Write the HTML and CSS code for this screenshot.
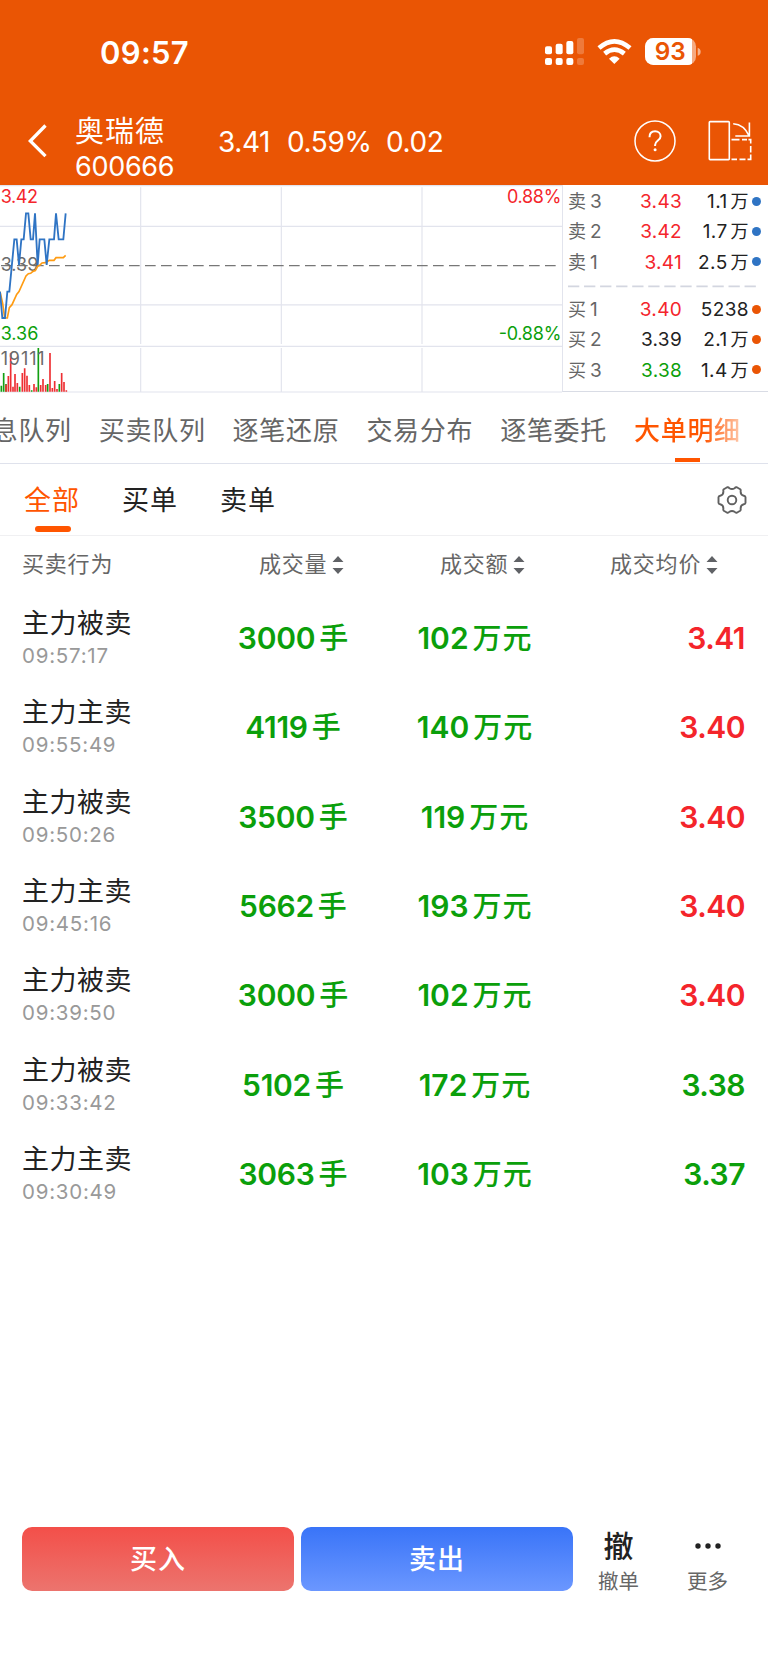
FILE: index.html
```html
<!DOCTYPE html>
<html lang="zh-CN">
<head>
<meta charset="utf-8">
<title>奥瑞德 600666</title>
<link rel="stylesheet" href="styles.css">
</head>
<body>
<header class="top">
  <div class="status">
    <span class="clock">09:57</span>
    <svg class="status-icons" viewBox="480 108 474 93" width="158" height="31">
      <g fill="#fff">
        <rect x="483" y="139" width="21" height="24" rx="6"/>
        <rect x="515" y="131" width="21" height="32" rx="6"/>
        <rect x="547" y="123" width="21" height="40" rx="6"/>
        <rect x="579" y="114" width="21" height="49" rx="6" opacity=".22"/>
        <rect x="483" y="174" width="21" height="21" rx="6"/>
        <rect x="515" y="174" width="21" height="21" rx="6"/>
        <rect x="547" y="174" width="21" height="21" rx="6"/>
        <rect x="579" y="174" width="21" height="21" rx="6" opacity=".22"/>
        <path d="M691 192 L675 176 Q691 162 707 176 Z"/>
      </g>
      <path d="M645 144 Q691 104 738 144" fill="none" stroke="#fff" stroke-width="14"/>
      <path d="M662 161 Q691 137 721 161" fill="none" stroke="#fff" stroke-width="14"/>
      <clipPath id="charge"><rect x="783" y="114" width="141" height="81"/></clipPath>
      <rect x="783" y="114" width="153" height="81" rx="25" fill="#fff" opacity=".5"/>
      <rect x="783" y="114" width="153" height="81" rx="25" fill="#fff" clip-path="url(#charge)"/>
      <path d="M941 143 Q950 146 950 155 Q950 164 941 167 Z" fill="#fff" opacity=".55"/>
      <text class="battery" x="859" y="181" text-anchor="middle" textLength="93" lengthAdjust="spacingAndGlyphs">93</text>
    </svg>
  </div>
  <div class="nav">
    <svg class="back" viewBox="0 0 20 34" width="20" height="34"><path d="M17.5 1.5 2.3 17l15.2 15.2" fill="none" stroke="#fff" stroke-width="3.300"/></svg>
    <div class="stock"><div class="name">奥瑞德</div><div class="code">600666</div></div>
    <div class="quote"><span class="q1">3.41</span><span class="q2">0.59%</span><span class="q3">0.02</span></div>
    <svg class="help" viewBox="0 0 42 42" width="42" height="42" fill="none" stroke="#fff"><circle cx="21" cy="21" r="20" stroke-width="1.5"/><path d="M15.5 17.2c0-3.8 2.3-5.9 5.6-5.9 3.2 0 5.5 2 5.500 4.900 0 4.300-5.500 4.400-5.500 8.700v1" stroke-width="2"/><circle cx="21.1" cy="29.8" r="1.5" fill="#fff" stroke="none"/></svg>
    <svg class="rotate" viewBox="0 0 44 42" width="44" height="42" fill="none" stroke="#fff" stroke-width="1.600"><rect x="1.3" y="1.6" width="20" height="38" rx=".8"/><path d="M25.200 3.700C33 4.300 37.800 8.200 41 15.800M27.300 16H41.400V2.600"/><path d="M23.500 19.600h8M34 19.600h5M40.500 19.600h2.200v4M42.700 26v6.500M42.700 34.500V39.400h-3.200M37.500 39.400h-6M29 39.400h-5.500"/></svg>
  </div>
</header>

<section class="market">
  <svg class="chart" viewBox="0 15 1686 624" width="562" height="208">
    <g stroke="#e2e4ed" stroke-width="3.500" fill="none">
      <path d="M0 17H1686M0 139H1686M0 374.500H1686M0 499H1686M0 636H1686"/>
      <path d="M422 22V492M422 504V636M844 22V492M844 504V636M1266 22V492M1266 504V636"/>
    </g>
    <path d="M0 257H1671" stroke="#777" stroke-width="3.500" stroke-dasharray="32 16" stroke-dashoffset="-3"/>
    <g class="axis">
      <text x="2" y="69" class="red" textLength="112">3.42</text>
      <text x="2" y="274" class="gray" textLength="113">3.39</text>
      <text x="2" y="480" class="green" textLength="113">3.36</text>
      <text x="1684" y="69" class="red" text-anchor="end" textLength="163">0.88%</text>
      <text x="1684" y="480" class="green" text-anchor="end" textLength="188">-0.88%</text>
    </g>
    <g stroke-width="5">
      <path stroke="#12a012" d="M4 635V617M11 635V579M18 635V612M59 635V620M95 635V631M115 635V504M143 635V612M178 635V612"/>
      <path stroke="#ee2f33" d="M18 635V614M25 635V588M32 635V519M39 635V620M45 635V582M52 635V609M67 635V579M74 635V565M81 635V587M88 635V615M102 635V612M109 635V622M122 635V615M129 635V597M137 635V615M150 635V519M157 635V624M164 635V603M171 635V627M185 635V579M192 635V606M199 635V631"/>
    </g>
    <g class="axis"><text x="2" y="556" class="gray" textLength="132">19111</text></g>
    <path fill="none" stroke="#ff9c13" stroke-width="5" d="M0 335 8 370 14 414 22 414 28 383 36 374 50 343 57 335 78 288 85 281 92 280 99 274 106 272 113 259 119 256 126 249 136 248 148 241 162 241 168 233 190 233 197 226"/>
    <path fill="none" stroke="#2f74c4" stroke-width="5.500" d="M0 335 7 414 15 414 22 335 28 335 43 178 50 178 57 255 64 178 71 178 78 100 85 100 92 178 99 178 105 100 113 255 119 178 133 178 140 255 148 178 162 178 168 100 176 178 190 178 197 100"/>
  </svg>
  <div class="book">
    <div class="lvl"><span>卖<i>3</i></span><b class="red">3.43</b><em>1.1<i>万</i></em><u class="sell"></u></div>
    <div class="lvl"><span>卖<i>2</i></span><b class="red">3.42</b><em>1.7<i>万</i></em><u class="sell"></u></div>
    <div class="lvl"><span>卖<i>1</i></span><b class="red">3.41</b><em>2.5<i>万</i></em><u class="sell"></u></div>
    <svg class="split" viewBox="0 0 189 17" width="189" height="17"><path d="M0 8.300H188.500" stroke="#d3d6e0" stroke-width="1.800" stroke-dasharray="11.300 4.750"/></svg>
    <div class="lvl"><span>买<i>1</i></span><b class="red">3.40</b><em>5238</em><u class="buy"></u></div>
    <div class="lvl"><span>买<i>2</i></span><b>3.39</b><em>2.1<i>万</i></em><u class="buy"></u></div>
    <div class="lvl"><span>买<i>3</i></span><b class="green">3.38</b><em>1.4<i>万</i></em><u class="buy"></u></div>
  </div>
</section>

<nav class="tabs">
  <span>消息队列</span><span>买卖队列</span><span>逐笔还原</span><span>交易分布</span><span>逐笔委托</span><span class="active">大单明细</span>
</nav>
<div class="filters">
  <span class="on">全部</span><span>买单</span><span>卖单</span>
  <svg class="gear" viewBox="-15 -15 30 30" width="30" height="30" fill="none" stroke="#606060" stroke-width="1.900" stroke-linejoin="round"><path d="M-4.800-12.700 Q-3.500-13-2.600-11.800 Q0-10.200 2.600-11.800 Q3.500-13 4.800-12.700 L8.200-10.700 Q9-10 8.600-8.500 Q8.600-5 11.800-4.300 Q13.300-4 13.500-2.800 V2.800 Q13.300 4 11.800 4.300 Q8.600 5 8.600 8.500 Q9 10 8.200 10.700 L4.800 12.700 Q3.500 13 2.600 11.800 Q0 10.200-2.600 11.800 Q-3.500 13-4.800 12.700 L-8.200 10.700 Q-9 10-8.600 8.500 Q-8.600 5-11.800 4.300 Q-13.300 4-13.500 2.800 V-2.800 Q-13.300-4-11.800-4.300 Q-8.600-5-8.600-8.500 Q-9-10-8.200-10.700Z"/><circle r="4.300"/></svg>
</div>

<div class="thead">
  <span class="h0">买卖行为</span>
  <span class="h1">成交量<svg class="sort" viewBox="0 0 12 18" width="12" height="18"><path d="M6 0 11.500 6H.5ZM6 18 11.500 12H.5Z"/></svg></span>
  <span class="h2">成交额<svg class="sort" viewBox="0 0 12 18" width="12" height="18"><path d="M6 0 11.500 6H.5ZM6 18 11.500 12H.5Z"/></svg></span>
  <span class="h3">成交均价<svg class="sort" viewBox="0 0 12 18" width="12" height="18"><path d="M6 0 11.500 6H.5ZM6 18 11.500 12H.5Z"/></svg></span>
</div>
<main class="list">
  <div class="row"><div class="act">主力被卖<time>09:57:17</time></div><div class="vol">3000<i>手</i></div><div class="amt">102<i>万元</i></div><div class="price red">3.41</div></div>
  <div class="row"><div class="act">主力主卖<time>09:55:49</time></div><div class="vol">4119<i>手</i></div><div class="amt">140<i>万元</i></div><div class="price red">3.40</div></div>
  <div class="row"><div class="act">主力被卖<time>09:50:26</time></div><div class="vol">3500<i>手</i></div><div class="amt">119<i>万元</i></div><div class="price red">3.40</div></div>
  <div class="row"><div class="act">主力主卖<time>09:45:16</time></div><div class="vol">5662<i>手</i></div><div class="amt">193<i>万元</i></div><div class="price red">3.40</div></div>
  <div class="row"><div class="act">主力被卖<time>09:39:50</time></div><div class="vol">3000<i>手</i></div><div class="amt">102<i>万元</i></div><div class="price red">3.40</div></div>
  <div class="row"><div class="act">主力被卖<time>09:33:42</time></div><div class="vol">5102<i>手</i></div><div class="amt">172<i>万元</i></div><div class="price green">3.38</div></div>
  <div class="row"><div class="act">主力主卖<time>09:30:49</time></div><div class="vol">3063<i>手</i></div><div class="amt">103<i>万元</i></div><div class="price green">3.37</div></div>
</main>

<footer class="bar">
  <div class="btn buyin">买入</div>
  <div class="btn sellout">卖出</div>
  <div class="tool t1"><strong>撤</strong><span>撤单</span></div>
  <div class="tool t2"><svg viewBox="0 0 28 36" width="28" height="36"><g fill="#222"><circle cx="4" cy="19" r="2.700"/><circle cx="14" cy="19" r="2.700"/><circle cx="24" cy="19" r="2.700"/></g></svg><span>更多</span></div>
</footer>
</body>
</html>
```
FILE: styles.css
```css
* { box-sizing: border-box; }
body {
  margin: 0;
  width: 768px;
  height: 1665px;
  display: flex;
  flex-direction: column;
  overflow: hidden;
  background: #fff;
  color: #222;
  font-family: Inter, "Noto Sans CJK SC", sans-serif;
  white-space: nowrap;
}
svg { display: block; flex: none; }
i, em { font-style: normal; }
.red { color: #f4252b; fill: #f4252b; }
.green { color: #0b9f0b; fill: #0b9f0b; }
.gray { fill: #6b6b6b; }

.top { height: 185px; flex: none; background: #ea5504; color: #fff; }
.status { height: 104px; display: flex; padding: 34px 66px 0 100px; justify-content: space-between; }
.clock { font-size: 31px; font-weight: 600; line-height: 37px; letter-spacing: 0.3px; }
.status-icons { margin-top: 2px; }
.battery { font: 600 74px Inter, sans-serif; fill: #ea5504; }
.nav { height: 81px; display: flex; padding-left: 28px; }
.back { margin-top: 20px; }
.stock { margin-left: 27px; width: 143px; }
.name { font-size: 29px; line-height: 36px; margin-top: 10px; letter-spacing: 1px; }
.code { font-size: 27px; line-height: 34px; letter-spacing: -0.3px; }
.quote { display: flex; font-size: 28px; line-height: 36px; margin-top: 20px; letter-spacing: -0.4px; width: 416px; }
.q1 { width: 69px; }
.q2 { width: 99px; }
.help { margin-top: 16px; }
.rotate { margin: 16px 0 0 32px; }

.market { display: flex; height: 208px; flex: none; }
.chart { overflow: hidden; }
.axis { font: 54px Inter, sans-serif; }
.book { width: 206px; height: 207px; border-left: 1px solid #e2e4ed; border-bottom: 1px solid #d9dce5; padding-top: 2px; }
.lvl { height: 30.300px; display: flex; align-items: center; font-size: 19px; line-height: 30px; padding-left: 5px; }
.lvl span { width: 52px; color: #666; font-size: 18px; }
.lvl span i { font-size: 19px; margin-left: 4px; }
.lvl b { width: 62px; text-align: right; font-weight: 400; letter-spacing: 0.3px; }
.lvl em { width: 67px; text-align: right; letter-spacing: 0.4px; }
.lvl em i { font-size: 18px; margin-left: 3px; }
.lvl u { width: 9px; height: 9px; border-radius: 50%; margin: 0 0 2px 3px; }
.sell { background: #2f74c4; }
.buy { background: #ea5504; }
.split { margin-left: 5px; }

.tabs { height: 71px; flex: none; display: flex; gap: 27px; margin-left: -35px; width: 803px; overflow: hidden; border-bottom: 1px solid #dfe2ec; color: #666; font-size: 26px; letter-spacing: 0.700px; line-height: 75px; }
.tabs span { width: 106.800px; flex: none; height: 70px; }
.tabs .active { color: transparent; font-weight: 500; background: linear-gradient(#ff5500, #ff5500) 41px 65px / 25px 4px no-repeat, linear-gradient(90deg, #ff5500 65%, #ffc9ac 100%) text; }

.filters { height: 72px; flex: none; display: flex; gap: 42px; padding: 0 21px 0 24px; border-bottom: 1px solid #f0f0f2; font-size: 27px; letter-spacing: 1px; line-height: 73px; align-items: flex-start; }
.filters span { width: 56px; }
.filters .on { color: #ff5500; height: 68px; position: relative; }
.filters .on::after { content: ""; position: absolute; left: 11px; top: 62px; width: 36px; height: 6px; border-radius: 3px; background: #ff5500; }
.gear { margin: 21px 0 0 auto; }

.thead { height: 57px; flex: none; display: flex; padding-left: 22px; color: #666; font-size: 22px; letter-spacing: 0.800px; line-height: 57px; }
.h0 { width: 237px; }
.h1 { width: 181px; display: flex; align-items: center; }
.h2 { width: 170px; display: flex; align-items: center; }
.h3 { display: flex; align-items: center; }
.sort { margin-left: 5px; fill: #606266; }

.list { flex: 1; padding-top: 1px; }
.row { height: 89.330px; display: flex; font-size: 30px; font-weight: 600; line-height: 88px; }
.act { width: 193px; padding: 12px 0 0 22px; font-size: 27px; font-weight: 400; line-height: 36px; letter-spacing: 0.500px; }
.act time { display: block; color: #999; font-size: 20.500px; line-height: 28px; letter-spacing: 0.750px; }
.vol { width: 201px; text-align: center; color: #0b9f0b; letter-spacing: -0.3px; }
.amt { width: 162px; text-align: center; color: #0b9f0b; }
.row i { font-size: 29px; font-weight: 500; margin-left: 4px; letter-spacing: 1px; }
.price { width: 189px; text-align: right; letter-spacing: -0.5px; }

.bar { height: 139px; flex: none; display: flex; padding: 1px 0 0 22px; }
.btn { width: 272px; height: 64px; border-radius: 10px; color: #fff; text-align: center; font-size: 27px; font-weight: 500; line-height: 66px; letter-spacing: 1px; }
.buyin { background: linear-gradient(#f34f49, #ec746e); margin-right: 7px; }
.sellout { background: linear-gradient(#3974f8, #6b97ff); margin-right: 1px; }
.tool { display: flex; flex-direction: column; align-items: center; width: 89px; }
.tool strong { font-size: 30px; font-weight: 500; line-height: 38px; height: 36px; }
.tool span { font-size: 20.500px; color: #666; line-height: 38px; }
```
